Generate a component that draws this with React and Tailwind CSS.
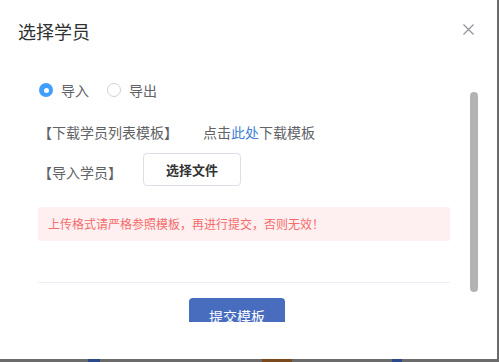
import React from 'react';

const FONT = { fontFamily: '"Noto Sans CJK SC", "Noto Sans", sans-serif' };

function Radio({ checked, label }) {
  return (
    <label className="flex items-center gap-2 text-[14px] leading-5 text-[#606266]">
      {checked ? (
        <span className="flex h-[14px] w-[14px] items-center justify-center rounded-full bg-[#409eff]">
          <span className="h-[5px] w-[5px] rounded-full bg-white" />
        </span>
      ) : (
        <span className="h-[14px] w-[14px] rounded-full border border-[#cfd1d6] bg-white" />
      )}
      {label}
    </label>
  );
}

export default function App() {
  return (
    <div className="relative h-[362px] w-[499px] overflow-hidden bg-[#6b6b6b]" style={FONT}>
      {/* a sliver of the page behind the overlay */}
      <div className="absolute bottom-0 left-[88px] h-[3px] w-[12px] bg-[#2b4a8a]" />
      <div className="absolute bottom-0 left-[262px] h-[3px] w-[30px] bg-[#7a4a1e]" />
      <div className="absolute bottom-0 left-[392px] h-[3px] w-[10px] bg-[#2b4a8a]" />

      <div className="relative flex h-[359px] w-[497px] flex-col bg-white">
        {/* header */}
        <div className="flex h-[62px] shrink-0 items-start justify-between pl-[18px] pr-[23px] pt-[19px]">
          <h3 className="text-[18px] leading-6 text-[#303133]">选择学员</h3>
          <button className="mt-[5px] text-[#909399]" aria-label="close">
            <svg width="11" height="11" viewBox="0 0 11 11" fill="none" stroke="currentColor" strokeWidth="1.2">
              <path d="M0.5 0.5L10.5 10.5M10.5 0.5L0.5 10.5" />
            </svg>
          </button>
        </div>

        {/* body */}
        <div className="relative h-[260px] shrink-0 overflow-hidden">
          <div className="flex w-[450px] flex-col pl-[38px] pt-[18px]">
            <div className="flex items-center gap-[18px] pl-px">
              <Radio checked label="导入" />
              <Radio label="导出" />
            </div>

            <div className="mt-[22px] flex items-center text-[14px] leading-5 text-[#606266]">
              <span>【下载学员列表模板】</span>
              <span className="ml-[25px]">
                点击<a className="text-[#3f7fd9]">此处</a>下载模板
              </span>
            </div>

            <div className="mt-[11px] flex items-center text-[14px] leading-5 text-[#606266]">
              <span className="pt-[4px]">【导入学员】</span>
              <button className="ml-[21px] h-[33px] w-[98px] rounded-[4px] border border-[#dcdfe6] bg-white text-[13px] font-bold text-[#333]">
                选择文件
              </button>
            </div>

            <div className="mt-[21px] flex h-[34px] items-center rounded-[2px] bg-[#fef0f0] pl-[10px] text-[12px] text-[#f56c6c]">
              上传格式请严格参照模板，再进行提交，否则无效！
            </div>

            <div className="mt-[41px] h-px bg-[#ebeef5]" />

            <div className="mt-[15px] flex">
              <button className="ml-[151px] h-[36px] w-[96px] rounded-[4px] bg-[#486dbf] text-[14px] text-white">
                提交模板
              </button>
            </div>
          </div>
        </div>

        {/* scrollbar thumb over body */}
        <div className="absolute left-[470px] top-[92px] h-[200px] w-[8px] rounded-full bg-[#b3b3b3]" />
      </div>
    </div>
  );
}
